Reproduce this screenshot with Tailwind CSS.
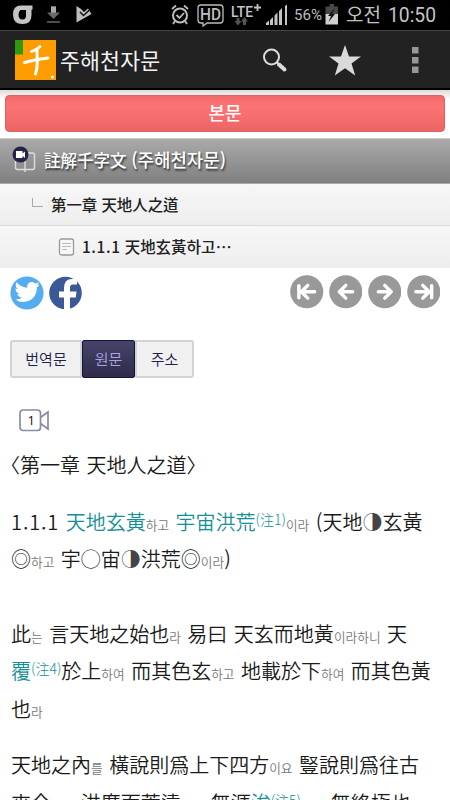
<!DOCTYPE html>
<html lang="ko">

<head>
    <meta charset="UTF-8">
    <meta name="viewport" content="width=device-width, initial-scale=1.0">
    <title>주해천자문</title>
    <script src="https://cdn.jsdelivr.net/npm/@tailwindcss/browser@4"></script>
</head>

<body class="bg-white font-['Noto_Sans_CJK_KR',sans-serif]">
    <div class="w-[450px] h-[800px] overflow-hidden flex flex-col">
        <!-- Status bar -->
        <div class="h-[30px] shrink-0 bg-black text-[#bdbdbd] flex items-center">
            <svg class="w-[180px] h-[30px] shrink-0" viewBox="0 0 180 30" fill="none">
                <path d="M32.500 5.500H21Q13 5.500 13 14.500Q13 24 22.500 24Q31.500 24 31.500 15V9.500H32.500ZM20.500 10H26V15.500Q26 19.500 22.500 19.500Q18.500 19.500 18.500 14.500Q18.500 11.500 20.500 10Z" fill="#c4c4c4" fill-rule="evenodd" />
                <path d="M51 6.500h5v6h4l-6.500 6.500l-6.500-6.500h4z" fill="#6a6a6a" />
                <path d="M51 6.500h5v6h-5z" fill="#aaa" />
                <path d="M47 22h13" stroke="#686868" stroke-width="1.500" />
                <path d="M76.500 6l4.500 3l3 3l4-3.500l3.500 5.500l-15 8.500z" fill="#bdbdbd" />
                <path d="M80 12l3.500 3.500l7-6.500" stroke="#111" stroke-width="1.500" />
            </svg>
            <svg class="w-[115px] h-[30px] shrink-0 -ml-[10px]" viewBox="170 0 115 30" fill="none" stroke="#bdbdbd">
                <circle cx="180" cy="15.500" r="7" stroke-width="2" />
                <path d="M176.500 15l3 3l4.500-5M172 9l4-3.500M188 9l-4-3.500M175 21l-2 3M185 21l2 3" stroke-width="1.800" />
                <path d="M201 5h19q3 0 3 3v12q0 3-3 3h-13l-4 3v-3h-2q-3 0-3-3V8q0-3 3-3z" stroke-width="1.300" />
                <text x="200" y="20" textLength="21" lengthAdjust="spacingAndGlyphs" stroke="none" fill="#bdbdbd" class="font-['Roboto'] font-medium text-[16px]">HD</text>
                <text x="231" y="17" textLength="22" lengthAdjust="spacingAndGlyphs" stroke="none" fill="#c4c4c4" class="font-['Roboto'] font-medium text-[15px]">LTE</text>
                <path d="M254 7.500h7M257.500 4v7" stroke-width="1.800" />
                <path d="M236.500 18h3v3h2l-3.500 4.500l-3.500-4.500h2zM243 25h3v-3.500h2l-3.500-4.500l-3.500 4.500h2z" fill="#555" stroke="none" />
                <path d="M266 25v-2l3-2.500V25zM270 25v-5l3-3v8zM274.500 25v-9.500l3-3V25zM279 25V11l3-3v17z" fill="#c4c4c4" stroke="none" />
            </svg>
            <svg class="w-[165px] h-[30px] shrink-0" viewBox="285 0 165 30" fill="none">
                <path d="M283 25V7.500l4-3V25z" fill="#c4c4c4" />
                <text x="294" y="20" textLength="28" lengthAdjust="spacingAndGlyphs" fill="#bdbdbd" class="font-['Roboto'] text-[15px]">56%</text>
                <path d="M325.500 6.500h4V4h4.500v2.500h4V14h-12.500z" fill="#484848" />
                <path d="M325.500 14h12.500v10.500h-12.500z" fill="#d0d0d0" />
                <path d="M335 8l-7 8h3l-2.500 6l6.500-8h-3z" fill="#111" />
                <text x="346" y="22" textLength="35" lengthAdjust="spacingAndGlyphs" fill="#c4c4c4" class="text-[19px]">오전</text>
                <text x="388" y="22" textLength="48" lengthAdjust="spacingAndGlyphs" fill="#c4c4c4" class="font-['Roboto'] text-[20px]">10:50</text>
            </svg>
        </div>

        <!-- Action bar -->
        <div class="h-[60px] shrink-0 bg-[#222] border-t border-t-[#444] border-b-2 border-b-black flex items-center pl-[15px]">
            <svg class="w-[41px] h-[40px] shrink-0" viewBox="0 0 41 40" fill="none">
                <path d="M0 0h41v40H0z" fill="#ff9c00" />
                <path d="M0 0h8v14.500H0z" fill="#2d9a0b" />
                <g stroke="#fff" stroke-linecap="round" stroke-linejoin="round">
                    <path d="M25 6.500q-3 3.500-8.500 5" stroke-width="2.800" />
                    <path d="M9.500 22.500L22 19.500L33 18" stroke-width="3" />
                    <path d="M22 10.500L22.300 22Q22.300 29 20.500 34" stroke-width="3" />
                </g>
                <circle cx="37.500" cy="37" r="1.600" fill="#fff" />
            </svg>
            <div class="ml-[4px] w-[101px] text-[21.700px] leading-none tracking-[0.100px] text-[#f3f3f3] whitespace-nowrap">주해천자문</div>
            <svg class="w-[289px] h-[58px] shrink-0" viewBox="161 31 289 58" fill="none">
                <circle cx="271.500" cy="57" r="7.500" stroke="#dcdcdc" stroke-width="2" />
                <path d="M276.500 62l2 2" stroke="#dcdcdc" stroke-width="2" />
                <path d="M279 64.500l5.500 5" stroke="#dcdcdc" stroke-width="4" stroke-linecap="round" />
                <path d="M345 45l4 11.500h12l-9.500 7l3.700 12l-10.200-7.200l-10.200 7.200l3.700-12l-9.500-7h12z" fill="#dadada" />
                <path d="M412 47h6.500v6.500H412zM412 57h6.500v6.500H412zM412 66.500h6.500V73H412z" fill="#979797" />
            </svg>
        </div>

        <!-- Main tab -->
        <div class="h-[48px] shrink-0 bg-linear-to-b from-[#ddd] to-white to-20% px-[5px] pt-[5px]">
            <div class="h-[37px] rounded-[4px] border border-[#e05f5f] bg-linear-to-b from-[#f16a6a] via-[#fc7373] via-30% to-[#ec6565] text-white font-medium text-[18px] flex items-center justify-center pb-[2px]">본문</div>
        </div>

        <!-- Breadcrumb rows -->
        <div class="h-[46px] shrink-0 bg-linear-to-b from-[#aaa] to-[#808080] border-t border-t-[#ccc] border-b border-b-[#aaa] flex items-center">
            <svg class="ml-[12px] w-[24px] h-[28px] mb-[4px]" viewBox="12 145 24 28" fill="none">
                <rect x="15.500" y="153" width="19" height="16.500" rx="2" stroke="#ddd" stroke-width="1.400" />
                <path d="M25 161v11" stroke="#ddd" stroke-width="1.400" />
                <circle cx="20.500" cy="154.500" r="8" fill="#25234a" />
                <path d="M16 151h6.500v2.500l2.500-2v6.500l-2.500-2v2H16z" fill="#fff" />
            </svg>
            <div class="ml-[8px] text-[16.500px] font-medium text-white whitespace-nowrap [text-shadow:1px_2px_2px_#333] pb-[2px]">註解千字文 <span class="text-[17.900px] leading-none">(주해천자문)</span></div>
        </div>
        <div class="h-[42px] shrink-0 bg-linear-to-b from-[#f7f7f7] to-[#eee] border-b border-[#ddd] flex items-center">
            <div class="ml-[32px] w-[11px] h-[9px] border-l border-b border-[#aaa] mb-[4px]"></div>
            <div class="ml-[8px] text-[15.400px] font-medium text-[#222] whitespace-nowrap">第一章 天地人之道</div>
        </div>
        <div class="h-[42px] shrink-0 bg-linear-to-b from-[#f7f7f7] to-[#eee] flex items-center">
            <svg class="ml-[58px] w-[17px] h-[18px] mb-[1px]" viewBox="0 0 17 18" fill="none" stroke="#999">
                <rect x="1.500" y="1" width="14" height="16" rx="2" fill="#f8f8f8" stroke-width="1.300" />
                <path d="M4 5.500h9M4 8.500h9M4 11.500h5" stroke="#bbb" />
            </svg>
            <div class="ml-[7px] text-[15.400px] font-medium text-[#222] whitespace-nowrap"><span class="tracking-[0.600px]">1.1.1</span> 天地玄黃<span class="text-[15.900px] leading-none">하고⋯</span></div>
        </div>

        <!-- Share and pager -->
        <div class="h-[72px] shrink-0 flex items-start justify-between pl-[10px] pr-[10px] pt-[7px]">
            <div class="flex gap-[5px] pt-[1px]">
                <svg class="w-[34px] h-[34px]" viewBox="0 0 34 34">
                    <circle cx="17" cy="17" r="16.600" fill="#55acee" />
                    <path d="M5.500 23.500q4 .2 6.500-2q-3.700-.3-4.700-3.500h2.200Q5.500 16.500 5.500 12.500l2.300.6Q4.300 10 6.700 6.300q4.300 5.200 10.600 5.400Q16.500 6.500 21.600 6q2.400 0 3.900 1.600l3.300-1.300q-.5 1.800-2 3l2.700-.7q-.8 1.600-2.500 2.700Q26.800 19 22 23q-3.600 3-8.500 3t-8-2.500z" fill="#fff" />
                </svg>
                <svg class="w-[33px] h-[34px]" viewBox="0 0 33 34">
                    <circle cx="16.500" cy="17" r="16.300" fill="#3b5998" />
                    <path d="M15 34V21.500h-5v-6h5V12q0-9 8-9h5v5.500h-4q-3 0-3 3v4h6.500l-.7 6H21v12.200z" fill="#fff" />
                </svg>
            </div>
            <div class="flex gap-[5.300px]">
                <svg class="w-[33.500px] h-[33.500px]" viewBox="0 0 34 34" fill="none" stroke="#fff" stroke-width="3.500" stroke-linecap="round" stroke-linejoin="round">
                    <circle cx="17" cy="17" r="16.800" fill="#999" stroke="none" />
                    <path d="M25 17H12M18 10.500L11.500 17l6.500 6.500M9 11v12" />
                </svg>
                <svg class="w-[33.500px] h-[33.500px]" viewBox="0 0 34 34" fill="none" stroke="#fff" stroke-width="3.500" stroke-linecap="round" stroke-linejoin="round">
                    <circle cx="17" cy="17" r="16.800" fill="#999" stroke="none" />
                    <path d="M24 17H10.500M17 10.500L10.500 17l6.500 6.500" />
                </svg>
                <svg class="w-[33.500px] h-[33.500px]" viewBox="0 0 34 34" fill="none" stroke="#fff" stroke-width="3.500" stroke-linecap="round" stroke-linejoin="round">
                    <circle cx="17" cy="17" r="16.800" fill="#999" stroke="none" />
                    <path d="M10.500 17h13M17 10.500l6.500 6.500l-6.500 6.500" />
                </svg>
                <svg class="w-[33.500px] h-[33.500px]" viewBox="0 0 34 34" fill="none" stroke="#fff" stroke-width="3.500" stroke-linecap="round" stroke-linejoin="round">
                    <circle cx="17" cy="17" r="16.800" fill="#999" stroke="none" />
                    <path d="M9 17h13M16 10.500l6.500 6.500l-6.500 6.500M25 11v12" />
                </svg>
            </div>
        </div>

        <!-- View switch -->
        <div class="ml-[10px] h-[37.500px] shrink-0 flex text-[15px] leading-none text-[#22204a] font-[350]">
            <div class="w-[72px] rounded-l-[3px] border-2 border-[#d3d3d3] bg-[#f0f0f0] flex items-center justify-center">번역문</div>
            <div class="w-[53px] rounded-[2px] border border-[#15133a] bg-linear-to-b from-[#45436b] to-[#2e2c48] text-[#a9a4e0] flex items-center justify-center">원문</div>
            <div class="w-[59px] rounded-r-[3px] border-2 border-[#d3d3d3] bg-[#f0f0f0] flex items-center justify-center">주소</div>
        </div>

        <!-- Video marker -->
        <svg class="ml-[19px] mt-[31.500px] w-[31px] h-[23px] shrink-0" viewBox="0 0 31 23" fill="none" stroke="#8a8ba6" stroke-width="1.700">
            <rect x="1" y="1" width="20.500" height="20.500" rx="3" />
            <path d="M21.500 8.500l7.500-5.500v17l-7.500-5.500" />
            <text x="8.500" y="15.500" stroke="none" fill="#111" class="font-['Open_Sans'] text-[13px]">1</text>
        </svg>

        <!-- Text -->
        <div class="pl-[11px] text-[20px] leading-[37.500px] font-[350] text-[#1a1a1a] whitespace-nowrap [word-spacing:0.900px]">
            <p class="mt-[14px] -ml-[11px] h-[37.500px]">〈第一章 天地人之道〉</p>
            <p class="mt-[19px] h-[37.500px]"><span class="tracking-[0.900px]">1.1.1</span> <span class="text-[#138f97]">天地玄黃</span><span class="text-[12.700px] leading-none text-[#777]">하고</span> <span class="text-[#138f97]">宇宙洪荒<sup class="text-[14px] leading-none top-[-5px] font-light">(注1)</sup></span><span class="text-[12.700px] leading-none text-[#777]">이라</span> (天地<span class="font-light text-[#444]">◑</span>玄黃</p>
            <p class="h-[37.500px]">◎<span class="text-[12.700px] leading-none text-[#777]">하고</span> 宇◯宙<span class="font-light text-[#444]">◑</span>洪荒◎<span class="text-[12.700px] leading-none text-[#777]">이라</span>)</p>
            <p class="mt-[37px] h-[37.500px]">此<span class="text-[12.700px] leading-none text-[#777]">는</span> 言天地之始也<span class="text-[12.700px] leading-none text-[#777]">라</span> 易曰 天玄而地黃<span class="text-[12.700px] leading-none text-[#777]">이라하니</span> 天</p>
            <p class="h-[37.500px]"><span class="text-[#138f97]">覆<sup class="text-[14px] leading-none top-[-5px] font-light">(注4)</sup></span>於上<span class="text-[12.700px] leading-none text-[#777]">하여</span> 而其色玄<span class="text-[12.700px] leading-none text-[#777]">하고</span> 地載於下<span class="text-[12.700px] leading-none text-[#777]">하여</span> 而其色黃</p>
            <p class="h-[37.500px]">也<span class="text-[12.700px] leading-none text-[#777]">라</span></p>
            <p class="mt-[19px] h-[37.500px]">天地之內<span class="text-[12.700px] leading-none text-[#777]">를</span> 橫說則爲上下四方<span class="text-[12.700px] leading-none text-[#777]">이요</span> 豎說則爲往古</p>
            <p class="h-[37.500px]">來今<span class="text-[12.700px] leading-none text-[#777]">이니</span> 洪廣而荒遠<span class="text-[12.700px] leading-none text-[#777]">하여</span> 無涯<span class="text-[#138f97]">涘<sup class="text-[14px] leading-none top-[-5px] font-light">(注5)</sup></span><span class="text-[12.700px] leading-none text-[#777]">하고</span> 無終極也<span class="text-[12.700px] leading-none text-[#777]">라</span></p>
        </div>
    </div>
</body>

</html>
